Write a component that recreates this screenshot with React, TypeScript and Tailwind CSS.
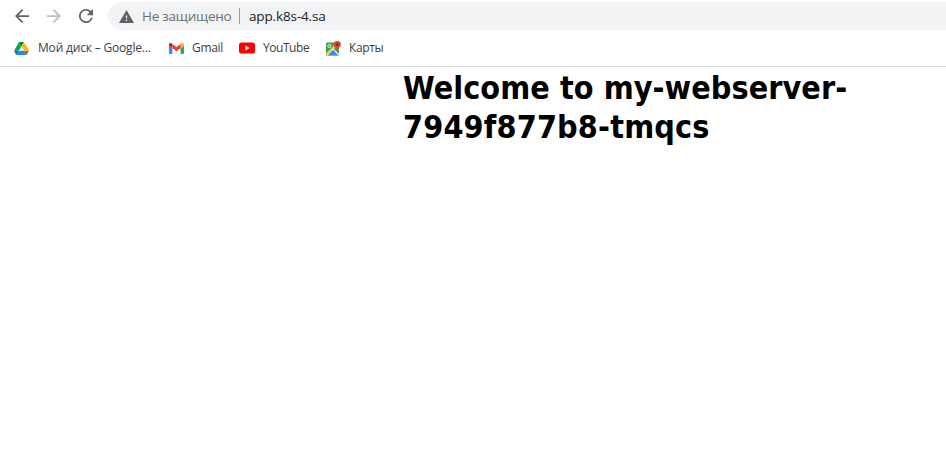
import React from "react";

function DriveIcon() {
  return (
    <svg className="h-[13px] w-[15px] shrink-0" viewBox="0 0 87.3 78">
      <path fill="#0066da" d="m6.6 66.85 3.85 6.65c.8 1.4 1.95 2.5 3.3 3.3l13.75-23.8h-27.5c0 1.55.4 3.1 1.2 4.5z" />
      <path fill="#00ac47" d="m43.65 25-13.75-23.8c-1.35.8-2.5 1.9-3.3 3.3l-25.4 44a9.06 9.06 0 0 0 -1.2 4.5h27.5z" />
      <path fill="#ea4335" d="m73.55 76.8c1.35-.8 2.5-1.9 3.3-3.3l1.6-2.75 7.65-13.25c.8-1.4 1.2-2.95 1.2-4.5h-27.5l5.85 11.5z" />
      <path fill="#00832d" d="m43.65 25 13.75-23.8c-1.35-.8-2.9-1.2-4.5-1.2h-18.5c-1.6 0-3.15.45-4.5 1.2z" />
      <path fill="#2684fc" d="m59.8 53h-32.3l-13.75 23.8c1.35.8 2.9 1.2 4.5 1.2h50.8c1.6 0 3.15-.45 4.5-1.2z" />
      <path fill="#ffba00" d="m73.4 26.5-12.7-22c-.8-1.4-1.95-2.5-3.3-3.3l-13.75 23.8 16.15 28h27.45c0-1.55-.4-3.1-1.2-4.5z" />
    </svg>
  );
}

function GmailIcon() {
  return (
    <svg className="h-[11px] w-[15px] shrink-0" viewBox="52 42 88 66" preserveAspectRatio="none">
      <path fill="#4285f4" d="M58 108h14V74L52 59v43c0 3.32 2.69 6 6 6" />
      <path fill="#34a853" d="M120 108h14c3.32 0 6-2.69 6-6V59l-20 15" />
      <path fill="#fbbc04" d="M120 48v26l20-15v-8c0-7.42-8.47-11.65-14.4-7.2" />
      <path fill="#ea4335" d="M72 74V48l24 18 24-18v26L96 92" />
      <path fill="#c5221f" d="M52 51v8l20 15V48l-5.6-4.2c-5.94-4.45-14.4-.22-14.4 7.2" />
    </svg>
  );
}

function YouTubeIcon() {
  return (
    <svg className="h-3 w-4 shrink-0" viewBox="0 0 16 12">
      <rect y=".5" width="16" height="11" rx="2.6" fill="#f00" />
      <path d="M6.4 3.6 10.6 6 6.4 8.4z" fill="#fff" />
    </svg>
  );
}

function MapsIcon() {
  return (
    <svg className="h-[15px] w-[15px] shrink-0" viewBox="0 0 15 15">
      <rect y="1.5" width="13" height="13" rx="1" fill="#34a853" />
      <path d="M0 12.3 9.8 2.5l2.3 1.6L1.3 14.5H1a1 1 0 0 1-1-1z" fill="#fbc21a" />
      <path d="M7 7.2 13 12.8v.7a1 1 0 0 1-1 1H1.2L1 14z" fill="#e8eaed" />
      <path d="m7 8.8 5.4 5.7H1.6z" fill="#4285f4" />
      <circle cx="3.4" cy="5" r="1.5" fill="none" stroke="#fff" strokeWidth=".9" />
      <path d="M11.3 0A3.6 3.6 0 0 0 7.7 3.6c0 2.7 3 3.3 3.6 6.6.6-3.3 3.6-3.9 3.6-6.6A3.6 3.6 0 0 0 11.3 0z" fill="#e04336" />
      <circle cx="11.3" cy="3.6" r="1.25" fill="#8e1c16" />
    </svg>
  );
}

function Toolbar() {
  return (
    <div className="flex h-8 items-center pl-[15px]">
      <svg className="h-[14px] w-[14px] shrink-0" viewBox="4 4 16 16" fill="#5f6368">
        <path d="M20 11H7.83l5.59-5.59L12 4l-8 8 8 8 1.41-1.41L7.83 13H20z" />
      </svg>
      <svg className="ml-[18px] h-[14px] w-[14px] shrink-0" viewBox="4 4 16 16" fill="#babcbe">
        <path d="m12 4-1.41 1.41L16.17 11H4v2h12.17l-5.58 5.59L12 20l8-8z" />
      </svg>
      <svg className="ml-[18px] h-[14px] w-[14px] shrink-0" viewBox="4 4 16 16" fill="#5f6368">
        <path d="M17.65 6.35A7.96 7.96 0 0 0 12 4a8 8 0 1 0 7.73 10h-2.08A6 6 0 1 1 12 6c1.66 0 3.14.69 4.22 1.78L13 11h7V4z" />
      </svg>
      <div className="ml-[15px] flex h-7 flex-1 items-center rounded-l-full bg-[#f1f3f4] pl-[11px] text-[13.5px]">
        <svg className="h-[13px] w-[15px] shrink-0" viewBox="1 2 22 19" fill="#5f6368">
          <path d="M1 21h22L12 2zm12-3h-2v-2h2zm0-4h-2v-4h2z" />
        </svg>
        <span className="ml-2 w-[97px] whitespace-nowrap tracking-[-0.25px] text-[#6b6f74]">Не защищено</span>
        <span className="h-4 w-px bg-[#9aa0a6]" />
        <span className="ml-[9px] whitespace-nowrap tracking-[-0.15px] text-[#202124]">app.k8s-4.sa</span>
      </div>
    </div>
  );
}

function Bookmarks() {
  return (
    <div className="flex h-[35px] items-center border-b border-[#dadce0] pb-0.5 pl-[14px] text-[12px] text-[#3c4043]">
      <div className="flex w-[155px] items-center gap-[9px]">
        <DriveIcon />
        <span className="whitespace-nowrap tracking-[-0.18px]">Мой диск – Google...</span>
      </div>
      <div className="flex w-[70px] items-center gap-2">
        <GmailIcon />
        <span className="tracking-[-0.3px]">Gmail</span>
      </div>
      <div className="flex w-[87px] items-center gap-2">
        <YouTubeIcon />
        <span className="tracking-[-0.45px]">YouTube</span>
      </div>
      <div className="flex items-center gap-2">
        <MapsIcon />
        <span className="tracking-[-0.4px]">Карты</span>
      </div>
    </div>
  );
}

export default function App() {
  return (
    <div className="h-[460px] w-[946px] overflow-hidden bg-white font-['Open_Sans','Noto_Sans',sans-serif]">
      <Toolbar />
      <Bookmarks />
      <main className="pt-0.5 pl-[403px]">
        <h1 className="font-['DejaVu_Sans_Condensed','DejaVu_Sans',sans-serif] text-[32px] leading-[39px] font-bold text-black">
          <span className="block whitespace-nowrap tracking-[0.06px]">Welcome to my-webserver-</span>
          <span className="block whitespace-nowrap tracking-[0.17px]">7949f877b8-tmqcs</span>
        </h1>
      </main>
    </div>
  );
}
